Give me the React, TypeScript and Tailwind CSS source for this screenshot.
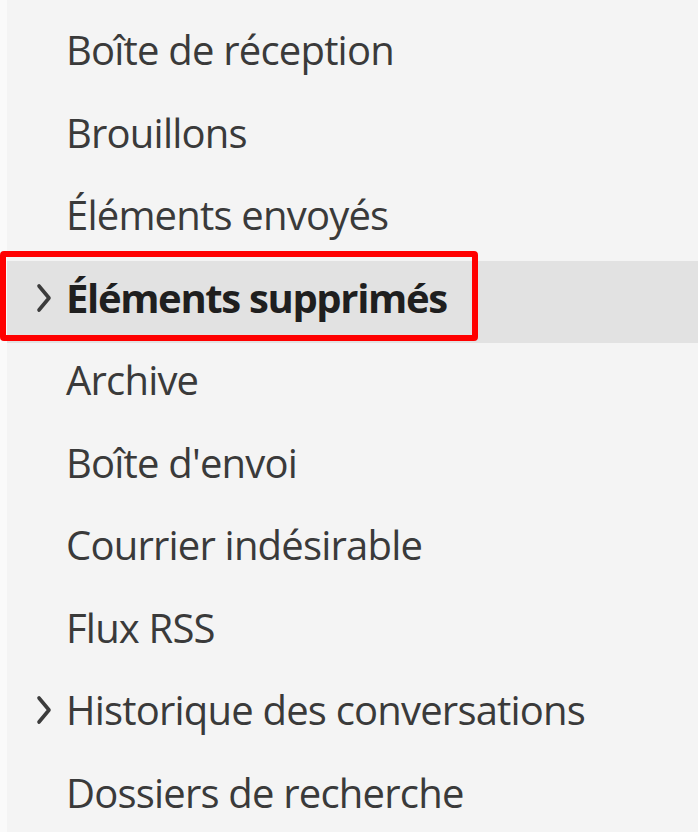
const folders = [
  { name: 'Boîte de réception' },
  { name: 'Brouillons' },
  { name: 'Éléments envoyés' },
  { name: 'Éléments supprimés', expandable: true, selected: true },
  { name: 'Archive' },
  { name: "Boîte d'envoi" },
  { name: 'Courrier indésirable' },
  { name: 'Flux RSS' },
  { name: 'Historique des conversations', expandable: true },
  { name: 'Dossiers de recherche' },
];

const Chevron = () => (
  <svg width="18" height="32" viewBox="0 0 18 32" fill="none" className="text-[#3c3c3c]">
    <path d="M4 4 L14 16 L4 28" stroke="currentColor" strokeWidth="3.6" strokeLinecap="round" strokeLinejoin="round" />
  </svg>
);

export default function App() {
  return (
    <div className="w-[698px] h-[832px] overflow-hidden bg-[#fafafa] flex">
      <div className="w-[7px] shrink-0" />
      <div className="flex-1 bg-[#f4f4f4] pt-[13px] font-['Open_Sans',sans-serif]">
        {folders.map((f) => (
          <div
            key={f.name}
            className={`relative h-[82.5px] flex items-center pb-[8px] ${f.selected ? 'bg-[#e2e2e2]' : ''}`}
          >
            <div className="w-[59px] shrink-0 flex justify-start pl-[28px]">
              {f.expandable && <Chevron />}
            </div>
            <span
              className={`text-[40px] leading-none whitespace-nowrap ${
                f.selected
                  ? 'font-bold tracking-[-1.35px] text-[#1f1f1f]'
                  : 'tracking-[-0.8px] text-[#3a3a3a]'
              }`}
            >
              {f.name}
            </span>
            {f.selected && (
              <div className="absolute left-[-7px] top-[-10px] w-[478px] h-[90px] border-[6px] border-[#ff0000] rounded-[4px]" />
            )}
          </div>
        ))}
      </div>
    </div>
  );
}
